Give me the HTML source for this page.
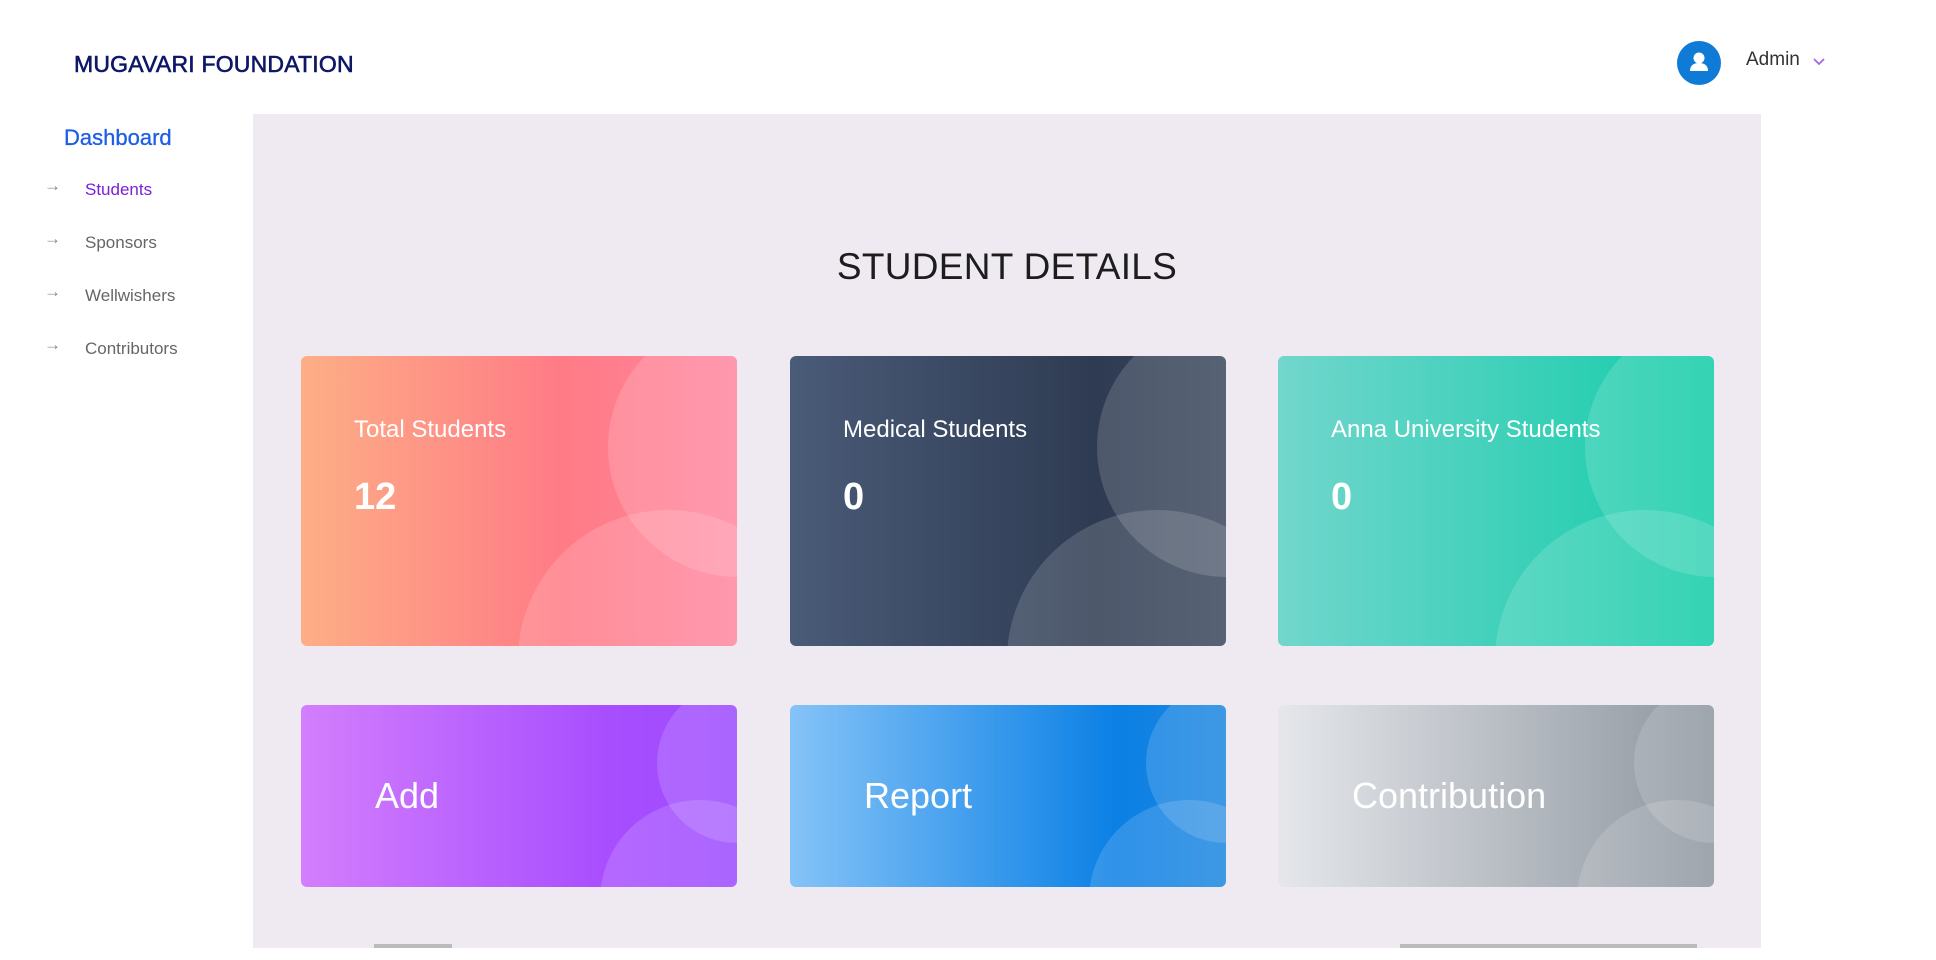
<!DOCTYPE html>
<html><head><meta charset="utf-8"><style>
*{margin:0;padding:0;box-sizing:border-box}
body{width:1936px;height:960px;background:#fff;font-family:"Liberation Sans",sans-serif;position:relative;overflow:hidden}
.abs{position:absolute}
.brand{left:74px;top:51px;font-size:23px;color:#0e1766;letter-spacing:0.2px;-webkit-text-stroke:0.6px #0e1766}
.dash{left:64px;top:125px;font-size:22px;color:#1e5ee6;-webkit-text-stroke:0.3px #1e5ee6}
.nav{left:44px;font-size:17px;color:#666}
.nav span{position:absolute;left:41px;white-space:nowrap}
.nav span.ar{left:0;top:-4px;color:#888}
.panel{left:253px;top:114px;width:1508px;height:834px;background:#efeaf1}
.title{left:0;width:1508px;top:132px;text-align:center;font-size:37px;color:#1d1d1d;letter-spacing:0.3px}
.card{position:absolute;border-radius:6px;overflow:hidden;color:#fff}
.c{position:absolute;border-radius:50%;background:rgba(255,255,255,0.15)}
.lbl{position:absolute;left:53px;top:60px;font-size:24px}
.num{position:absolute;left:53px;top:120px;font-size:38px;font-weight:bold}
.big{position:absolute;left:74px;top:70px;font-size:36px}
</style></head><body>
<div class="abs brand">MUGAVARI FOUNDATION</div>
<div class="abs" style="left:1677px;top:41px;width:44px;height:44px;border-radius:50%;background:#0f7bd6">
<svg width="44" height="44" viewBox="0 0 44 44"><circle cx="22" cy="17" r="5.5" fill="#fff"/><path d="M13 30c0-6 4-8 9-8s9 2 9 8z" fill="#fff"/></svg></div>
<div class="abs" style="left:1746px;top:49px;font-size:19px;color:#333">Admin</div>
<svg class="abs" style="left:1813px;top:58px" width="12" height="8" viewBox="0 0 12 8"><path d="M1 1l5 5 5-5" stroke="#a06ae0" stroke-width="1.8" fill="none"/></svg>
<div class="abs dash">Dashboard</div>
<div class="abs nav" style="top:180px"><span class="ar">→</span><span style="color:#7a1fd8">Students</span></div>
<div class="abs nav" style="top:233px"><span class="ar">→</span><span>Sponsors</span></div>
<div class="abs nav" style="top:286px"><span class="ar">→</span><span>Wellwishers</span></div>
<div class="abs nav" style="top:339px"><span class="ar">→</span><span>Contributors</span></div>
<div class="abs panel">
<div class="abs title">STUDENT DETAILS</div>
<div class="card" style="left:48px;top:242px;width:436px;height:290px;background:linear-gradient(to right,#fdae86,#ff7b86 60%,#ff86a0)">
<div class="c" style="left:307px;top:-39px;width:260px;height:260px"></div><div class="c" style="left:217px;top:154px;width:300px;height:300px"></div>
<div class="lbl">Total Students</div><div class="num">12</div></div>
<div class="card" style="left:537px;top:242px;width:436px;height:290px;background:linear-gradient(to right,#4a5b78,#2e3b52 70%,#3a475c)">
<div class="c" style="left:307px;top:-39px;width:260px;height:260px"></div><div class="c" style="left:217px;top:154px;width:300px;height:300px"></div>
<div class="lbl">Medical Students</div><div class="num">0</div></div>
<div class="card" style="left:1025px;top:242px;width:436px;height:290px;background:linear-gradient(to right,#72d6cd,#12cca8)">
<div class="c" style="left:307px;top:-39px;width:260px;height:260px"></div><div class="c" style="left:217px;top:154px;width:300px;height:300px"></div>
<div class="lbl">Anna University Students</div><div class="num">0</div></div>
<div class="card" style="left:48px;top:591px;width:436px;height:182px;background:linear-gradient(to right,#d37efd,#a84eff 70%,#9c4bff)">
<div class="c" style="left:356px;top:-22px;width:160px;height:160px"></div><div class="c" style="left:299px;top:95px;width:200px;height:200px"></div>
<div class="big">Add</div></div>
<div class="card" style="left:537px;top:591px;width:436px;height:182px;background:linear-gradient(to right,#85c3f7,#0b80e5 75%,#1d86e0)">
<div class="c" style="left:356px;top:-22px;width:160px;height:160px"></div><div class="c" style="left:299px;top:95px;width:200px;height:200px"></div>
<div class="big">Report</div></div>
<div class="card" style="left:1025px;top:591px;width:436px;height:182px;background:linear-gradient(to right,#e5e7eb,#8e969f)">
<div class="c" style="left:356px;top:-22px;width:160px;height:160px"></div><div class="c" style="left:299px;top:95px;width:200px;height:200px"></div>
<div class="big">Contribution</div></div>
<div class="abs" style="left:121px;top:830px;width:78px;height:4px;background:#bbb"></div>
<div class="abs" style="left:1147px;top:830px;width:297px;height:4px;background:#bbb"></div>
</div>
</body></html>
